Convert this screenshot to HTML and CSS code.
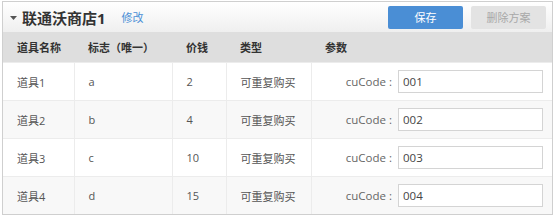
FILE: index.html
```html
<!DOCTYPE html>
<html lang="zh-CN">
<head>
  <meta charset="UTF-8" />
  <title>联通沃商店1</title>
  <link rel="stylesheet" href="styles.css">
</head>
<body>
  <div class="panel">
    <!-- 标题栏 -->
    <div class="panel-head">
      <svg class="caret" width="7" height="4" viewBox="0 0 7 4"><path d="M0 0H7L3.5 4Z" fill="#555"/></svg>
      <span class="title">联通沃商店1</span>
      <a class="edit-link" href="#">修改</a>
      <div class="actions">
        <button class="btn btn-save">保存</button>
        <button class="btn btn-delete">删除方案</button>
      </div>
    </div>

    <!-- 道具列表 -->
    <table class="items">
      <colgroup>
        <col class="col-name">
        <col class="col-tag">
        <col class="col-price">
        <col class="col-type">
        <col>
      </colgroup>
      <thead>
        <tr>
          <th>道具名称</th>
          <th>标志（唯一）</th>
          <th>价钱</th>
          <th>类型</th>
          <th>参数</th>
        </tr>
      </thead>
      <tbody>
        <tr>
          <td>道具1</td><td>a</td><td>2</td><td>可重复购买</td>
          <td><div class="param"><span class="param-label">cuCode :</span><input class="param-input" value="001"></div></td>
        </tr>
        <tr>
          <td>道具2</td><td>b</td><td>4</td><td>可重复购买</td>
          <td><div class="param"><span class="param-label">cuCode :</span><input class="param-input" value="002"></div></td>
        </tr>
        <tr>
          <td>道具3</td><td>c</td><td>10</td><td>可重复购买</td>
          <td><div class="param"><span class="param-label">cuCode :</span><input class="param-input" value="003"></div></td>
        </tr>
        <tr>
          <td>道具4</td><td>d</td><td>15</td><td>可重复购买</td>
          <td><div class="param"><span class="param-label">cuCode :</span><input class="param-input" value="004"></div></td>
        </tr>
      </tbody>
    </table>
  </div>
</body>
</html>
```

FILE: styles.css
```css
body {
  margin: 0;
  padding: 1px 5px 0 2px;
  background: #fff;
  font-family: "Open Sans", "Noto Sans CJK SC", sans-serif;
  font-size: 11px;
  color: #555;
}

.panel {
  border: 1px solid #cfcfcf;
  width: 549px;
}

.panel-head {
  display: flex;
  align-items: center;
  height: 30px;
  padding: 0 6px 0 7px;
  background: linear-gradient(#ffffff, #efefef);
}

.caret {
  margin-right: 5px;
  margin-top: 1px;
}

.title {
  font-size: 15px;
  font-weight: bold;
  color: #333;
}

.edit-link {
  margin-left: 16px;
  color: #4a8fd6;
  text-decoration: none;
  font-size: 11px;
}

.actions {
  margin-left: auto;
  display: flex;
  gap: 8px;
}

.btn {
  width: 75px;
  height: 23px;
  border: none;
  border-radius: 2px;
  font-family: inherit;
  font-size: 11px;
  cursor: pointer;
}

.btn-save {
  background: #4a8ed5;
  color: #fff;
}

.btn-delete {
  background: #e3e3e3;
  color: #a8a8a8;
}

.items {
  width: 100%;
  border-collapse: collapse;
  table-layout: fixed;
}

.col-name { width: 71px; }
.col-tag { width: 98px; }
.col-price { width: 54px; }
.col-type { width: 85px; }

.items th {
  height: 30px;
  padding: 0 14px;
  background: #dedede;
  text-align: left;
  font-weight: bold;
  color: #333;
  white-space: nowrap;
}

.items td {
  height: 37px;
  padding: 0 14px;
  border-top: 1px solid #ececec;
  border-left: 1px solid #ececec;
  white-space: nowrap;
}

.items td:first-child {
  border-left: none;
}

.items tbody tr:nth-child(even) {
  background: #f8f8f8;
}

.items td:last-child {
  padding-right: 9px;
}

.param {
  display: flex;
  align-items: center;
  justify-content: flex-end;
}

.param-label {
  font-size: 11.5px;
  color: #666;
  margin-right: 6px;
}

.param-input {
  box-sizing: border-box;
  width: 145px;
  height: 23px;
  padding: 0 4px;
  border: 1px solid #d4d4d4;
  font-family: inherit;
  font-size: 11.5px;
  color: #444;
  background: #fff;
}
```
